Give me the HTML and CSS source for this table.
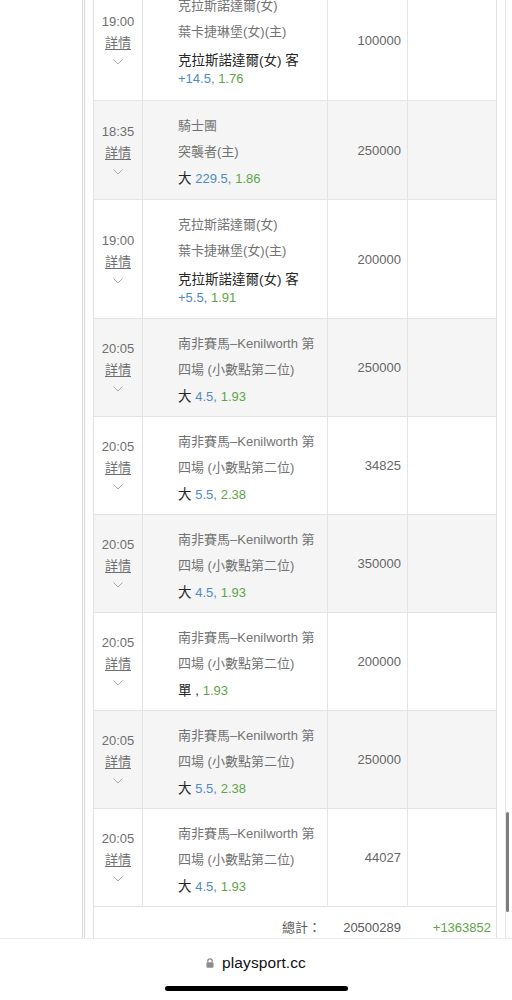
FILE: index.html
```html
<!DOCTYPE html>
<html lang="zh-Hant">
<head>
<meta charset="utf-8">
<title>playsport</title>
<link rel="stylesheet" href="styles.css">
</head>
<body>
<div class="page">
  <div class="table">
    <div class="row first">
      <div class="cell time"><div class="clock">19:00</div><span class="detail">詳情</span><svg class="chev" width="10" height="6" viewBox="0 0 10 6"><polyline points="0.5,0.5 5,5 9.5,0.5"/></svg></div>
      <div class="cell match team"><div class="line">克拉斯諾達爾(女)</div><div class="line">葉卡捷琳堡(女)(主)</div><div class="pick">克拉斯諾達爾(女) 客</div><div class="odds"><span class="hcp">+14.5,</span> <span class="price">1.76</span></div></div>
      <div class="cell amount">100000</div>
      <div class="cell result"></div>
    </div>
    <div class="row alt first-alt">
      <div class="cell time"><div class="clock">18:35</div><span class="detail">詳情</span><svg class="chev" width="10" height="6" viewBox="0 0 10 6"><polyline points="0.5,0.5 5,5 9.5,0.5"/></svg></div>
      <div class="cell match"><div class="line">騎士團</div><div class="line">突襲者(主)</div><div class="pick">大 <span class="hcp">229.5,</span> <span class="price">1.86</span></div></div>
      <div class="cell amount">250000</div>
      <div class="cell result"></div>
    </div>
    <div class="row">
      <div class="cell time"><div class="clock">19:00</div><span class="detail">詳情</span><svg class="chev" width="10" height="6" viewBox="0 0 10 6"><polyline points="0.5,0.5 5,5 9.5,0.5"/></svg></div>
      <div class="cell match team"><div class="line">克拉斯諾達爾(女)</div><div class="line">葉卡捷琳堡(女)(主)</div><div class="pick">克拉斯諾達爾(女) 客</div><div class="odds"><span class="hcp">+5.5,</span> <span class="price">1.91</span></div></div>
      <div class="cell amount">200000</div>
      <div class="cell result"></div>
    </div>
    <div class="row alt">
      <div class="cell time"><div class="clock">20:05</div><span class="detail">詳情</span><svg class="chev" width="10" height="6" viewBox="0 0 10 6"><polyline points="0.5,0.5 5,5 9.5,0.5"/></svg></div>
      <div class="cell match"><div class="name">南非賽馬–Kenilworth 第四場 (小數點第二位)</div><div class="pick">大 <span class="hcp">4.5,</span> <span class="price">1.93</span></div></div>
      <div class="cell amount">250000</div>
      <div class="cell result"></div>
    </div>
    <div class="row">
      <div class="cell time"><div class="clock">20:05</div><span class="detail">詳情</span><svg class="chev" width="10" height="6" viewBox="0 0 10 6"><polyline points="0.5,0.5 5,5 9.5,0.5"/></svg></div>
      <div class="cell match"><div class="name">南非賽馬–Kenilworth 第四場 (小數點第二位)</div><div class="pick">大 <span class="hcp">5.5,</span> <span class="price">2.38</span></div></div>
      <div class="cell amount">34825</div>
      <div class="cell result"></div>
    </div>
    <div class="row alt">
      <div class="cell time"><div class="clock">20:05</div><span class="detail">詳情</span><svg class="chev" width="10" height="6" viewBox="0 0 10 6"><polyline points="0.5,0.5 5,5 9.5,0.5"/></svg></div>
      <div class="cell match"><div class="name">南非賽馬–Kenilworth 第四場 (小數點第二位)</div><div class="pick">大 <span class="hcp">4.5,</span> <span class="price">1.93</span></div></div>
      <div class="cell amount">350000</div>
      <div class="cell result"></div>
    </div>
    <div class="row">
      <div class="cell time"><div class="clock">20:05</div><span class="detail">詳情</span><svg class="chev" width="10" height="6" viewBox="0 0 10 6"><polyline points="0.5,0.5 5,5 9.5,0.5"/></svg></div>
      <div class="cell match"><div class="name">南非賽馬–Kenilworth 第四場 (小數點第二位)</div><div class="pick">單 , <span class="price">1.93</span></div></div>
      <div class="cell amount">200000</div>
      <div class="cell result"></div>
    </div>
    <div class="row alt">
      <div class="cell time"><div class="clock">20:05</div><span class="detail">詳情</span><svg class="chev" width="10" height="6" viewBox="0 0 10 6"><polyline points="0.5,0.5 5,5 9.5,0.5"/></svg></div>
      <div class="cell match"><div class="name">南非賽馬–Kenilworth 第四場 (小數點第二位)</div><div class="pick">大 <span class="hcp">5.5,</span> <span class="price">2.38</span></div></div>
      <div class="cell amount">250000</div>
      <div class="cell result"></div>
    </div>
    <div class="row">
      <div class="cell time"><div class="clock">20:05</div><span class="detail">詳情</span><svg class="chev" width="10" height="6" viewBox="0 0 10 6"><polyline points="0.5,0.5 5,5 9.5,0.5"/></svg></div>
      <div class="cell match"><div class="name">南非賽馬–Kenilworth 第四場 (小數點第二位)</div><div class="pick">大 <span class="hcp">4.5,</span> <span class="price">1.93</span></div></div>
      <div class="cell amount">44027</div>
      <div class="cell result"></div>
    </div>
    <div class="total">
      <div class="total-label">總計：</div>
      <div class="total-amount">20500289</div>
      <div class="total-result">+1363852</div>
    </div>
  </div>
</div>
<div class="scroll-thumb"></div>
<div class="browser-bar">
  <div class="url">
    <svg class="lock" width="8" height="10" viewBox="0 0 8 10"><path d="M1.8 4.3V3a2.2 2.2 0 0 1 4.4 0v1.3" fill="none" stroke="#8c8c8c" stroke-width="1.2"/><rect x="0.5" y="4.2" width="7" height="5.6" rx="1" fill="#8c8c8c"/></svg>
    <span class="host">playsport.cc</span>
  </div>
  <div class="home-indicator"></div>
</div>
</body>
</html>
```

FILE: styles.css
```css
* { box-sizing: border-box; }

html, body {
  margin: 0;
  padding: 0;
  background: #fff;
}

body {
  font-family: "Liberation Sans", "Noto Sans CJK TC", sans-serif;
  color: #222;
  overflow: hidden;
  height: 1000px;
}

.page {
  margin-left: 82px;
  margin-top: -19px;
  width: 424px;
  min-height: 1100px;
  border-left: 3px double #d9d9d9;
  border-right: 1px solid #e6e6e6;
  padding: 0 8px;
}

.table {
  border-left: 1px solid #e2e2e2;
  border-right: 1px solid #e2e2e2;
  width: 404px;
}

.row {
  display: grid;
  grid-template-columns: 48px 185px 80px 89px;
  border-bottom: 1px solid #e4e4e4;
  background: #fff;
}

.row.alt {
  background: #f5f5f5;
}

.cell + .cell {
  border-left: 1px solid #e4e4e4;
}

.time {
  display: flex;
  flex-direction: column;
  align-items: center;
  justify-content: center;
  font-size: 13px;
  color: #6f6f6f;
  padding-top: 4px;
}

.clock {
  height: 21px;
  line-height: 21px;
}

.detail {
  display: block;
  height: 21px;
  line-height: 21px;
  text-decoration: underline;
  text-underline-offset: 2px;
  color: #6f6f6f;
}

.chev {
  display: block;
  margin-top: 6px;
  margin-bottom: 9px;
  fill: none;
  stroke: #ababab;
  stroke-width: 1;
}

.match {
  padding: 12px 6px 5px 35px;
}

.first-alt .match {
  padding-bottom: 6px;
}

.match.team {
  padding-bottom: 12px;
}

.first .match.team {
  padding-bottom: 13px;
}

.line {
  height: 26px;
  font-size: 13px;
  line-height: 26px;
  color: #737373;
}

.name {
  height: 52px;
  font-size: 13px;
  line-height: 26px;
  color: #737373;
  overflow: hidden;
}

.pick {
  height: 28px;
  font-size: 13.5px;
  line-height: 28px;
  color: #262626;
}

.team .pick {
  height: 20px;
  line-height: 20px;
  margin-top: 6px;
}

.odds {
  height: 16px;
  font-size: 13px;
  line-height: 16px;
}

.hcp {
  color: #4f8bc8;
  font-size: 13px;
}

.price {
  color: #5fa548;
  font-size: 13px;
}

.amount {
  display: flex;
  align-items: center;
  justify-content: flex-end;
  padding-right: 6px;
  font-size: 13px;
  color: #666;
}

.total {
  display: grid;
  grid-template-columns: 48px 185px 80px 89px;
  height: 44px;
  align-items: start;
  padding-top: 13px;
  font-size: 13px;
  line-height: 16px;
  color: #5a5a5a;
}

.total-label {
  grid-column: 2;
  text-align: right;
  padding-right: 6px;
}

.total-amount {
  text-align: right;
  padding-right: 6px;
}

.total-result {
  text-align: right;
  padding-right: 5px;
  color: #5fa548;
}

.scroll-thumb {
  position: fixed;
  left: 506px;
  top: 812px;
  width: 3px;
  height: 100px;
  border-radius: 2px;
  background: #7d7d7d;
}

.browser-bar {
  position: fixed;
  left: 0;
  bottom: 0;
  width: 512px;
  height: 62px;
  background: #fff;
  border-top: 1px solid #ececec;
  display: flex;
  flex-direction: column;
  align-items: center;
}

.url {
  display: flex;
  align-items: center;
  gap: 8px;
  margin-top: 13px;
  height: 22px;
}

.lock {
  display: block;
}

.host {
  font-size: 15.5px;
  color: #111;
  letter-spacing: 0.1px;
}

.home-indicator {
  margin-top: 12px;
  width: 183px;
  height: 5px;
  border-radius: 3px;
  background: #000;
}
```
